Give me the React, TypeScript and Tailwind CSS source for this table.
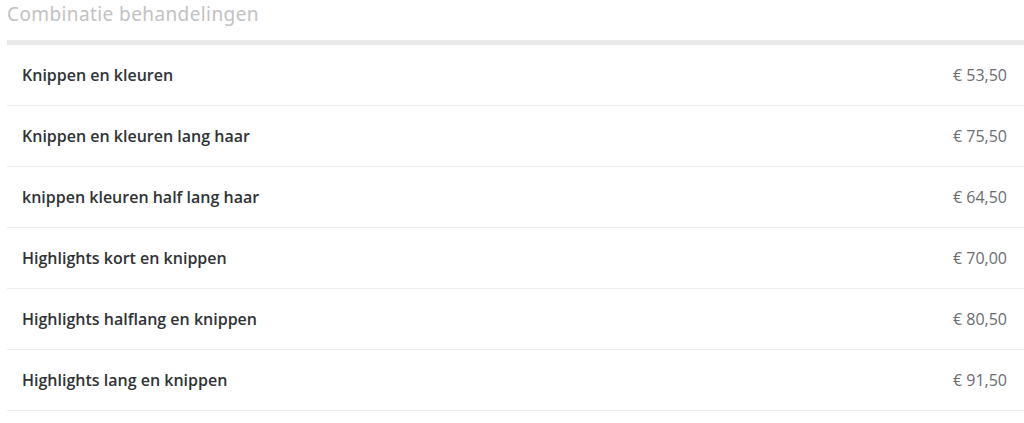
const items = [
  { name: 'Knippen en kleuren', price: '€ 53,50' },
  { name: 'Knippen en kleuren lang haar', price: '€ 75,50' },
  { name: 'knippen kleuren half lang haar', price: '€ 64,50' },
  { name: 'Highlights kort en knippen', price: '€ 70,00' },
  { name: 'Highlights halflang en knippen', price: '€ 80,50' },
  { name: 'Highlights lang en knippen', price: '€ 91,50' },
];

export default function App() {
  return (
    <div className="min-h-screen bg-white pl-[7px]" style={{ fontFamily: '"Open Sans", sans-serif' }}>
      <h2
        className="h-[40px] text-[19px] leading-[28px] tracking-[0.4px] text-[#c2c2c2]"
        style={{ fontFamily: '"Noto Sans", sans-serif' }}
      >
        Combinatie behandelingen
      </h2>
      <div className="border-t-[5px] border-[#e9e9e9]">
        {items.map((item) => (
          <div
            key={item.name}
            className="flex h-[61px] items-center justify-between border-b border-[#ececec] pl-[15px] pr-[17px]"
          >
            <span className="text-[16px] font-semibold text-[#2f3336]">{item.name}</span>
            <span className="text-[16px] text-[#6a6d70]">{item.price}</span>
          </div>
        ))}
      </div>
    </div>
  );
}
